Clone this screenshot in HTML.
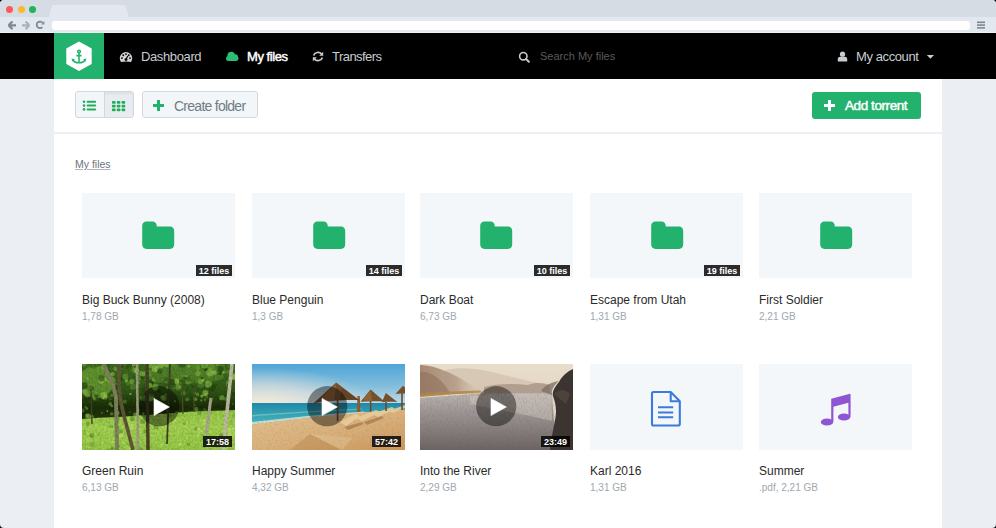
<!DOCTYPE html>
<html><head><meta charset="utf-8">
<style>
*{margin:0;padding:0;box-sizing:border-box}
html,body{width:996px;height:528px;background:#000;overflow:hidden}
body{font-family:"Liberation Sans",sans-serif}
#win{position:absolute;left:0;top:0;width:996px;height:528px;border-radius:4px;overflow:hidden;background:#ebeef2}
.abs{position:absolute}
#tabbar{left:0;top:0;width:996px;height:17px;background:#d6dce4}
#toolbar{left:0;top:17px;width:996px;height:16px;background:#e3e8f0;border-bottom:1px solid #eef2f7}
.dot{width:7px;height:7px;border-radius:50%;top:6px}
#addr{left:52px;top:21px;width:918px;height:9px;background:#fff;border-radius:3px}
#nav{left:0;top:33px;width:996px;height:46px;background:#000}
#logo{left:54px;top:33px;width:50px;height:46px;background:#23b26d}
.navtxt{top:49px;font-size:13px;line-height:16px;color:#c9cdd1;white-space:nowrap}
#content{left:54px;top:79px;width:888px;height:449px;background:#fff}
#sep{left:54px;top:132px;width:888px;height:2px;background:#ecf0f3}
.btn{border:1px solid #d3d8dd;background:#f3f6f8;border-radius:3px}
.card{width:153px;height:85px;background:#f4f7fa}
.title{font-size:12px;line-height:14px;color:#2a2a2a;white-space:nowrap}
.sub{font-size:10px;line-height:12px;color:#a0a8b0;white-space:nowrap}
.badge{background:#2b2b2b;color:#fff;font-size:9px;font-weight:700;line-height:11px;height:11px;padding:1px 2px 0;white-space:nowrap;text-align:center}
</style></head><body>
<div id="win">
  <div class="abs" id="tabbar"></div>
  <svg class="abs" style="left:0;top:0" width="140" height="18"><polygon points="52,5 125,5 129,17 49,17" fill="#e3e8f0"/></svg>
  <div class="abs dot" style="left:6px;background:#fa5b57"></div>
  <div class="abs dot" style="left:18px;background:#fcb731"></div>
  <div class="abs dot" style="left:29px;background:#22b35d"></div>
  <div class="abs" id="toolbar"></div>
  <div class="abs" id="addr"></div>
  <div class="abs" id="nav"></div>
  <div class="abs" id="logo"></div>
  <div class="abs" id="content"></div>
  <div class="abs" id="sep"></div>

  <!-- chrome icons -->
  <svg class="abs" style="left:6px;top:19px" width="42" height="13" viewBox="0 0 42 13">
    <path d="M2.5 6.3 L6.5 2.5 M2.5 6.3 L6.5 10.1 M2.5 6.3 L10 6.3" stroke="#7d8893" stroke-width="2.2" fill="none" stroke-linecap="butt"/>
    <path d="M23.5 6.3 L19.5 2.5 M23.5 6.3 L19.5 10.1 M23.5 6.3 L16 6.3" stroke="#a9b3bc" stroke-width="2.2" fill="none"/>
    <path d="M36.5 3.7 A3.3 3.3 0 1 0 36.4 8.1" stroke="#7d8893" stroke-width="1.8" fill="none"/>
    <path d="M35.2 5.5 L38.3 5.5 L38.3 2.0 Z" fill="#7d8893"/>
  </svg>
  <svg class="abs" style="left:976px;top:21px" width="10" height="8"><rect x="1" y="0.5" width="8" height="1.6" fill="#7d8893"/><rect x="1" y="3.3" width="8" height="1.6" fill="#7d8893"/><rect x="1" y="6.1" width="8" height="1.6" fill="#7d8893"/></svg>
  <!-- logo -->
  <svg class="abs" style="left:54px;top:33px" width="50" height="46" viewBox="0 0 50 46">
    <polygon points="25,8.4 37.7,15.4 37.7,30.9 25,37.9 12.3,30.9 12.3,15.4" fill="#fff"/>
    <g stroke="#23b26d" fill="none" stroke-width="1.6">
      <circle cx="25" cy="18.6" r="1.35"/>
      <path d="M25 20 V29.6"/>
      <path d="M22.4 22.6 H27.6"/>
      <path d="M18.8 26.8 Q20.2 29.7 25 29.7 Q29.8 29.7 31.2 26.8"/>
    </g>
    <path d="M17.4 25.6 L20.9 26.3 L18.6 28.6 Z M32.6 25.6 L29.1 26.3 L31.4 28.6 Z" fill="#23b26d"/>
  </svg>
  <!-- nav items -->
  <svg class="abs" style="left:119px;top:51px" width="14" height="12" viewBox="0 0 14 12">
    <path d="M1.95 10.9 A6.2 6.2 0 1 1 12.05 10.9 Q7 10.2 1.95 10.9 Z" fill="#cfd2d5"/>
    <g fill="#000"><circle cx="7" cy="3.1" r="0.95"/><circle cx="4.3" cy="4.3" r="0.95"/><circle cx="9.7" cy="4.3" r="0.95"/><circle cx="3" cy="7.1" r="0.95"/><circle cx="11" cy="7.1" r="0.95"/></g>
    <path d="M7 8.3 L8.8 5" stroke="#000" stroke-width="1.2"/><circle cx="7" cy="8.6" r="1.4" fill="#000"/>
  </svg>
  <div class="abs navtxt" style="left:141px;letter-spacing:-0.38px">Dashboard</div>
  <svg class="abs" style="left:225px;top:51px" width="15" height="11" viewBox="0 0 15 11">
    <g fill="#2dbb76"><circle cx="6.2" cy="4.5" r="3.8"/><circle cx="10.3" cy="5.9" r="2.7"/><circle cx="3.5" cy="7.5" r="2.5"/><circle cx="11.2" cy="7.6" r="2.4"/><rect x="3.5" y="6" width="7.7" height="4"/></g>
  </svg>
  <div class="abs navtxt" style="left:247px;color:#fff;font-weight:400;-webkit-text-stroke:0.45px #fff;font-size:13px;letter-spacing:-0.45px">My files</div>
  <svg class="abs" style="left:312px;top:51px" width="12" height="11" viewBox="0 0 12 11">
    <path d="M1.6 4.6 A4.6 4.4 0 0 1 9.6 3" stroke="#c9cdd1" stroke-width="1.7" fill="none"/>
    <path d="M11.2 0.8 L11.2 4.8 L7.2 4.8 Z" fill="#c9cdd1"/>
    <path d="M10.4 6.4 A4.6 4.4 0 0 1 2.4 8" stroke="#c9cdd1" stroke-width="1.7" fill="none"/>
    <path d="M0.8 10.2 L0.8 6.2 L4.8 6.2 Z" fill="#c9cdd1"/>
  </svg>
  <div class="abs navtxt" style="left:332px;letter-spacing:-0.54px">Transfers</div>
  <svg class="abs" style="left:518px;top:51px" width="12" height="12" viewBox="0 0 12 12">
    <circle cx="5.3" cy="5.2" r="3.7" stroke="#c8c9ca" stroke-width="1.6" fill="none"/>
    <path d="M8 8 L10.9 10.8" stroke="#c8c9ca" stroke-width="1.9" stroke-linecap="round"/>
  </svg>
  <div class="abs navtxt" style="left:540px;top:48px;font-size:11px;color:#5a5a5a">Search My files</div>
  <svg class="abs" style="left:837px;top:51px" width="11" height="11" viewBox="0 0 11 11">
    <circle cx="5.5" cy="3.2" r="2.6" fill="#c9cdd1"/>
    <path d="M0.8 10.5 V8.2 C0.8 6.6 2 5.8 3.2 5.8 H7.8 C9 5.8 10.2 6.6 10.2 8.2 V10.5 Z" fill="#c9cdd1"/>
  </svg>
  <div class="abs navtxt" style="left:856px;letter-spacing:-0.4px">My account</div>
  <svg class="abs" style="left:926px;top:54px" width="9" height="6"><path d="M0.8 1 H8 L4.4 4.8 Z" fill="#c9cdd1"/></svg>
<!--NAVEND-->

  <!-- toolbar -->
  <div class="abs btn" style="left:75px;top:91px;width:59px;height:27px;"></div>
  <div class="abs" style="left:104px;top:92px;width:29px;height:25px;background:#e8ecf0;box-shadow:inset 0 2px 2px rgba(0,0,0,0.05)"></div>
  <div class="abs" style="left:104px;top:92px;width:1px;height:25px;background:#d3d8dd"></div>
  <svg class="abs" style="left:82px;top:99px" width="16" height="13" viewBox="0 0 16 13">
    <g fill="#1fae5c"><circle cx="2" cy="2.7" r="1.3"/><circle cx="2" cy="6.6" r="1.3"/><circle cx="2" cy="10.4" r="1.3"/>
    <rect x="4.6" y="1.7" width="9.6" height="2" rx="1"/><rect x="4.6" y="5.6" width="9.6" height="2" rx="1"/><rect x="4.6" y="9.4" width="9.6" height="2" rx="1"/></g>
  </svg>
  <svg class="abs" style="left:111px;top:100px" width="15" height="12" viewBox="0 0 15 12">
    <g fill="#1fae5c">
    <rect x="1" y="1" width="3.6" height="2.8" rx="0.8"/><rect x="5.8" y="1" width="3.6" height="2.8" rx="0.8"/><rect x="10.6" y="1" width="3.6" height="2.8" rx="0.8"/>
    <rect x="1" y="4.7" width="3.6" height="2.8" rx="0.8"/><rect x="5.8" y="4.7" width="3.6" height="2.8" rx="0.8"/><rect x="10.6" y="4.7" width="3.6" height="2.8" rx="0.8"/>
    <rect x="1" y="8.4" width="3.6" height="2.8" rx="0.8"/><rect x="5.8" y="8.4" width="3.6" height="2.8" rx="0.8"/><rect x="10.6" y="8.4" width="3.6" height="2.8" rx="0.8"/>
    </g>
  </svg>
  <div class="abs btn" style="left:142px;top:91px;width:116px;height:27px;"></div>
  <svg class="abs" style="left:152px;top:99px" width="13" height="13"><path d="M5 1 H8 V5 H12 V8 H8 V12 H5 V8 H1 V5 H5 Z" fill="#23b26d"/></svg>
  <div class="abs" style="left:174px;top:98px;font-size:14px;line-height:16px;color:#6f7c87;white-space:nowrap;letter-spacing:-0.74px">Create folder</div>
  <div class="abs" style="left:812px;top:92px;width:109px;height:27px;background:#23b26d;border-radius:3px"></div>
  <svg class="abs" style="left:823px;top:99px" width="13" height="13"><path d="M5 1 H8 V5 H12 V8 H8 V12 H5 V8 H1 V5 H5 Z" fill="#fff"/></svg>
  <div class="abs" style="left:845px;top:98px;font-size:13.5px;line-height:16px;color:#fff;font-weight:400;-webkit-text-stroke:0.45px #fff;white-space:nowrap;letter-spacing:-0.42px">Add torrent</div>
  <div class="abs" style="left:75px;top:158px;font-size:10.5px;line-height:13px;color:#6c757e;white-space:nowrap;text-decoration:underline;text-decoration-color:#b0b6bc">My files</div>

  <!-- cards -->
  <div class="abs card" style="left:82px;top:193px"></div>
  <svg class="abs" style="left:142px;top:221px" width="33" height="29" viewBox="0 0 33 29"><path d="M4.5 0.6 H10.5 C13 0.6 14.8 2.4 14.8 5.6 H28 C30.5 5.6 32.2 7.4 32.2 10 V23.6 C32.2 26.2 30.5 28 28 28 H4.5 C2 28 0.2 26.2 0.2 23.6 V5 C0.2 2.4 2 0.6 4.5 0.6 Z" fill="#23b26d"/></svg>
  <div class="abs badge" style="left:196px;top:265px;width:36px">12 files</div>
  <div class="abs title" style="left:82px;top:293px">Big Buck Bunny (2008)</div>
  <div class="abs sub" style="left:82px;top:311px">1,78 GB</div>
  <div class="abs card" style="left:252px;top:193px"></div>
  <svg class="abs" style="left:312.6px;top:221px" width="33" height="29" viewBox="0 0 33 29"><path d="M4.5 0.6 H10.5 C13 0.6 14.8 2.4 14.8 5.6 H28 C30.5 5.6 32.2 7.4 32.2 10 V23.6 C32.2 26.2 30.5 28 28 28 H4.5 C2 28 0.2 26.2 0.2 23.6 V5 C0.2 2.4 2 0.6 4.5 0.6 Z" fill="#23b26d"/></svg>
  <div class="abs badge" style="left:366px;top:265px;width:36px">14 files</div>
  <div class="abs title" style="left:252px;top:293px">Blue Penguin</div>
  <div class="abs sub" style="left:252px;top:311px">1,3 GB</div>
  <div class="abs card" style="left:420px;top:193px"></div>
  <svg class="abs" style="left:480.3px;top:221px" width="33" height="29" viewBox="0 0 33 29"><path d="M4.5 0.6 H10.5 C13 0.6 14.8 2.4 14.8 5.6 H28 C30.5 5.6 32.2 7.4 32.2 10 V23.6 C32.2 26.2 30.5 28 28 28 H4.5 C2 28 0.2 26.2 0.2 23.6 V5 C0.2 2.4 2 0.6 4.5 0.6 Z" fill="#23b26d"/></svg>
  <div class="abs badge" style="left:534px;top:265px;width:36px">10 files</div>
  <div class="abs title" style="left:420px;top:293px">Dark Boat</div>
  <div class="abs sub" style="left:420px;top:311px">6,73 GB</div>
  <div class="abs card" style="left:590px;top:193px"></div>
  <svg class="abs" style="left:650.7px;top:221px" width="33" height="29" viewBox="0 0 33 29"><path d="M4.5 0.6 H10.5 C13 0.6 14.8 2.4 14.8 5.6 H28 C30.5 5.6 32.2 7.4 32.2 10 V23.6 C32.2 26.2 30.5 28 28 28 H4.5 C2 28 0.2 26.2 0.2 23.6 V5 C0.2 2.4 2 0.6 4.5 0.6 Z" fill="#23b26d"/></svg>
  <div class="abs badge" style="left:704px;top:265px;width:36px">19 files</div>
  <div class="abs title" style="left:590px;top:293px">Escape from Utah</div>
  <div class="abs sub" style="left:590px;top:311px">1,31 GB</div>
  <div class="abs card" style="left:759px;top:193px"></div>
  <svg class="abs" style="left:820px;top:221px" width="33" height="29" viewBox="0 0 33 29"><path d="M4.5 0.6 H10.5 C13 0.6 14.8 2.4 14.8 5.6 H28 C30.5 5.6 32.2 7.4 32.2 10 V23.6 C32.2 26.2 30.5 28 28 28 H4.5 C2 28 0.2 26.2 0.2 23.6 V5 C0.2 2.4 2 0.6 4.5 0.6 Z" fill="#23b26d"/></svg>
  <div class="abs title" style="left:759px;top:293px">First Soldier</div>
  <div class="abs sub" style="left:759px;top:311px">2,21 GB</div>
  <div class="abs title" style="left:82px;top:464px">Green Ruin</div>
  <div class="abs sub" style="left:82px;top:482px">6,13 GB</div>
  <div class="abs title" style="left:252px;top:464px">Happy Summer</div>
  <div class="abs sub" style="left:252px;top:482px">4,32 GB</div>
  <div class="abs title" style="left:420px;top:464px">Into the River</div>
  <div class="abs sub" style="left:420px;top:482px">2,29 GB</div>
  <div class="abs title" style="left:590px;top:464px">Karl 2016</div>
  <div class="abs sub" style="left:590px;top:482px">1,31 GB</div>
  <div class="abs title" style="left:759px;top:464px">Summer</div>
  <div class="abs sub" style="left:759px;top:482px">.pdf, 2,21 GB</div>
<!--CARDSEND-->

  <!-- row2 -->
<svg class="abs" style="left:82px;top:364px" width="153" height="86" viewBox="0 0 153 86">
  <defs>
   <linearGradient id="fg" x1="0" y1="0" x2="0" y2="1">
    <stop offset="0" stop-color="#426e22"/><stop offset="0.3" stop-color="#325a18"/><stop offset="0.5" stop-color="#1c2e08"/><stop offset="0.65" stop-color="#22360c"/><stop offset="1" stop-color="#22360c"/></linearGradient>
   <linearGradient id="gg" x1="0" y1="0" x2="0" y2="1"><stop offset="0" stop-color="#94c846"/><stop offset="0.4" stop-color="#a6d452"/><stop offset="1" stop-color="#98cc48"/></linearGradient>
   <filter id="tex" x="0" y="0" width="100%" height="100%"><feTurbulence type="fractalNoise" baseFrequency="0.45" numOctaves="2" seed="4"/><feColorMatrix type="matrix" values="0 0 0 0 0  0 0 0 0 0  0 0 0 0 0  0 0 0 -1.6 1.05"/></filter>
  </defs>
  <rect width="153" height="86" fill="url(#fg)"/>
<ellipse cx="14" cy="18" rx="18" ry="16" fill="#7cb43c" opacity="0.6"/>
<ellipse cx="100" cy="8" rx="50" ry="12" fill="#6aa032" opacity="0.45"/>
<circle cx="49.5" cy="3.7" r="2.9" fill="#82b840" opacity="0.6"/>
<circle cx="125.7" cy="1.6" r="2.7" fill="#94c84a" opacity="0.6"/>
<circle cx="5.7" cy="14.5" r="1.4" fill="#82b840" opacity="0.6"/>
<circle cx="84.3" cy="0.2" r="2.7" fill="#94c84a" opacity="0.6"/>
<circle cx="96.5" cy="20.2" r="1.4" fill="#1e3a0c" opacity="0.6"/>
<circle cx="7.6" cy="6.4" r="2.6" fill="#5a9030" opacity="0.6"/>
<circle cx="44.3" cy="3.5" r="1.5" fill="#2a5012" opacity="0.6"/>
<circle cx="85.7" cy="23.9" r="1.5" fill="#94c84a" opacity="0.6"/>
<circle cx="57.0" cy="18.8" r="1.4" fill="#6ea436" opacity="0.6"/>
<circle cx="94.7" cy="16.9" r="2.6" fill="#a6d456" opacity="0.6"/>
<circle cx="71.2" cy="33.1" r="2.1" fill="#94c84a" opacity="0.6"/>
<circle cx="121.5" cy="24.6" r="1.8" fill="#2a5012" opacity="0.6"/>
<circle cx="80.4" cy="31.3" r="3.1" fill="#2a5012" opacity="0.6"/>
<circle cx="93.2" cy="0.8" r="2.5" fill="#5a9030" opacity="0.6"/>
<circle cx="115.8" cy="3.8" r="2.5" fill="#6ea436" opacity="0.6"/>
<circle cx="147.2" cy="0.9" r="2.7" fill="#a6d456" opacity="0.6"/>
<circle cx="52.0" cy="11.3" r="2.5" fill="#34561a" opacity="0.6"/>
<circle cx="10.5" cy="1.6" r="1.9" fill="#82b840" opacity="0.6"/>
<circle cx="9.3" cy="24.7" r="2.9" fill="#34561a" opacity="0.6"/>
<circle cx="43.5" cy="12.7" r="2.9" fill="#6ea436" opacity="0.6"/>
<circle cx="143.9" cy="11.5" r="2.8" fill="#34561a" opacity="0.6"/>
<circle cx="9.0" cy="27.2" r="1.5" fill="#94c84a" opacity="0.6"/>
<circle cx="60.9" cy="32.8" r="2.5" fill="#5a9030" opacity="0.6"/>
<circle cx="68.7" cy="18.9" r="3.5" fill="#1e3a0c" opacity="0.6"/>
<circle cx="132.2" cy="8.6" r="2.3" fill="#a6d456" opacity="0.6"/>
<circle cx="104.5" cy="12.5" r="1.8" fill="#82b840" opacity="0.6"/>
<circle cx="27.0" cy="6.8" r="1.8" fill="#34561a" opacity="0.6"/>
<circle cx="127.2" cy="4.9" r="1.9" fill="#5a9030" opacity="0.6"/>
<circle cx="64.1" cy="12.0" r="2.7" fill="#5a9030" opacity="0.6"/>
<circle cx="105.6" cy="17.6" r="2.8" fill="#6ea436" opacity="0.6"/>
<circle cx="69.9" cy="31.1" r="3.7" fill="#1e3a0c" opacity="0.6"/>
<circle cx="60.9" cy="13.0" r="2.5" fill="#1e3a0c" opacity="0.6"/>
<circle cx="9.5" cy="0.6" r="1.7" fill="#5a9030" opacity="0.6"/>
<circle cx="16.8" cy="20.8" r="1.5" fill="#5a9030" opacity="0.6"/>
<circle cx="82.1" cy="34.1" r="2.8" fill="#82b840" opacity="0.6"/>
<circle cx="133.8" cy="21.3" r="1.6" fill="#2a5012" opacity="0.6"/>
<circle cx="146.2" cy="20.9" r="2.4" fill="#82b840" opacity="0.6"/>
<circle cx="129.9" cy="35.7" r="2.4" fill="#34561a" opacity="0.6"/>
<circle cx="47.7" cy="3.5" r="3.1" fill="#2a5012" opacity="0.6"/>
<circle cx="73.2" cy="24.3" r="2.5" fill="#94c84a" opacity="0.6"/>
<circle cx="145.5" cy="18.1" r="1.6" fill="#6ea436" opacity="0.6"/>
<circle cx="116.0" cy="9.3" r="2.9" fill="#82b840" opacity="0.6"/>
<circle cx="106.5" cy="7.9" r="2.2" fill="#5a9030" opacity="0.6"/>
<circle cx="54.4" cy="6.5" r="2.6" fill="#a6d456" opacity="0.6"/>
<circle cx="97.4" cy="21.3" r="3.2" fill="#94c84a" opacity="0.6"/>
<circle cx="123.3" cy="29.1" r="3.1" fill="#94c84a" opacity="0.6"/>
<circle cx="30.6" cy="16.7" r="3.1" fill="#6ea436" opacity="0.6"/>
<circle cx="120.9" cy="15.9" r="1.7" fill="#a6d456" opacity="0.6"/>
<circle cx="68.4" cy="33.6" r="3.8" fill="#a6d456" opacity="0.6"/>
<circle cx="12.3" cy="1.9" r="2.4" fill="#a6d456" opacity="0.6"/>
<circle cx="31.3" cy="21.7" r="3.5" fill="#6ea436" opacity="0.6"/>
<circle cx="73.4" cy="22.8" r="3.3" fill="#82b840" opacity="0.6"/>
<circle cx="127.7" cy="2.6" r="2.2" fill="#94c84a" opacity="0.6"/>
<circle cx="73.1" cy="4.8" r="3.3" fill="#a6d456" opacity="0.6"/>
<circle cx="13.3" cy="34.0" r="3.1" fill="#34561a" opacity="0.6"/>
<circle cx="61.4" cy="34.0" r="3.1" fill="#5a9030" opacity="0.6"/>
<circle cx="151.9" cy="-1.0" r="2.7" fill="#34561a" opacity="0.6"/>
<circle cx="123.4" cy="3.6" r="3.3" fill="#34561a" opacity="0.6"/>
<circle cx="100.6" cy="11.3" r="2.6" fill="#5a9030" opacity="0.6"/>
<circle cx="3.3" cy="28.4" r="3.1" fill="#82b840" opacity="0.6"/>
<circle cx="80.6" cy="33.5" r="2.3" fill="#94c84a" opacity="0.6"/>
<circle cx="126.4" cy="6.0" r="1.9" fill="#2a5012" opacity="0.6"/>
<circle cx="76.7" cy="27.0" r="2.0" fill="#1e3a0c" opacity="0.6"/>
<circle cx="127.6" cy="0.3" r="3.1" fill="#34561a" opacity="0.6"/>
<circle cx="101.4" cy="29.0" r="2.5" fill="#5a9030" opacity="0.6"/>
<circle cx="81.4" cy="17.9" r="1.2" fill="#34561a" opacity="0.6"/>
<circle cx="118.8" cy="21.1" r="3.2" fill="#5a9030" opacity="0.6"/>
<circle cx="26.4" cy="16.0" r="3.1" fill="#6ea436" opacity="0.6"/>
<circle cx="49.9" cy="17.7" r="2.6" fill="#82b840" opacity="0.6"/>
<circle cx="135.1" cy="0.2" r="1.7" fill="#6ea436" opacity="0.6"/>
<circle cx="118.2" cy="17.3" r="2.7" fill="#82b840" opacity="0.6"/>
<circle cx="67.8" cy="21.3" r="2.5" fill="#94c84a" opacity="0.6"/>
<circle cx="106.0" cy="15.2" r="2.6" fill="#34561a" opacity="0.6"/>
<circle cx="77.7" cy="7.4" r="2.6" fill="#2a5012" opacity="0.6"/>
<circle cx="141.2" cy="31.9" r="1.7" fill="#34561a" opacity="0.6"/>
<circle cx="21.0" cy="2.6" r="2.3" fill="#82b840" opacity="0.6"/>
<circle cx="102.7" cy="14.3" r="1.8" fill="#2a5012" opacity="0.6"/>
<circle cx="119.9" cy="32.1" r="1.6" fill="#a6d456" opacity="0.6"/>
<circle cx="21.9" cy="31.5" r="3.7" fill="#94c84a" opacity="0.6"/>
<circle cx="114.2" cy="1.6" r="3.5" fill="#5a9030" opacity="0.6"/>
<circle cx="151.5" cy="29.6" r="1.6" fill="#1e3a0c" opacity="0.6"/>
<circle cx="152.1" cy="13.3" r="2.3" fill="#a6d456" opacity="0.6"/>
<circle cx="48.7" cy="25.4" r="1.3" fill="#34561a" opacity="0.6"/>
<circle cx="67.4" cy="-1.3" r="2.1" fill="#2a5012" opacity="0.6"/>
<circle cx="78.4" cy="0.4" r="3.8" fill="#94c84a" opacity="0.6"/>
<circle cx="148.7" cy="2.0" r="1.9" fill="#6ea436" opacity="0.6"/>
<circle cx="138.6" cy="4.9" r="3.2" fill="#1e3a0c" opacity="0.6"/>
<circle cx="130.0" cy="23.7" r="3.7" fill="#1e3a0c" opacity="0.6"/>
<circle cx="22.9" cy="32.9" r="2.7" fill="#a6d456" opacity="0.6"/>
<circle cx="13.7" cy="0.2" r="3.0" fill="#1e3a0c" opacity="0.6"/>
<circle cx="137.0" cy="8.2" r="1.2" fill="#82b840" opacity="0.6"/>
<circle cx="122.6" cy="1.2" r="3.4" fill="#82b840" opacity="0.6"/>
<circle cx="40.5" cy="2.6" r="1.2" fill="#1e3a0c" opacity="0.6"/>
<circle cx="141.8" cy="8.2" r="1.5" fill="#94c84a" opacity="0.6"/>
<circle cx="143.5" cy="34.8" r="1.9" fill="#5a9030" opacity="0.6"/>
<circle cx="30.9" cy="9.9" r="2.0" fill="#94c84a" opacity="0.6"/>
<circle cx="44.4" cy="17.0" r="1.7" fill="#a6d456" opacity="0.6"/>
<circle cx="123.0" cy="35.8" r="1.3" fill="#6ea436" opacity="0.6"/>
<circle cx="112.2" cy="18.9" r="1.7" fill="#34561a" opacity="0.6"/>
<circle cx="37.6" cy="15.0" r="2.9" fill="#1e3a0c" opacity="0.6"/>
<circle cx="100.4" cy="18.7" r="3.5" fill="#2a5012" opacity="0.6"/>
<circle cx="105.2" cy="35.3" r="2.1" fill="#5a9030" opacity="0.6"/>
<circle cx="61.9" cy="11.2" r="1.3" fill="#5a9030" opacity="0.6"/>
<circle cx="2.2" cy="21.8" r="3.5" fill="#1e3a0c" opacity="0.6"/>
<circle cx="25.0" cy="1.2" r="3.4" fill="#2a5012" opacity="0.6"/>
<circle cx="91.6" cy="24.3" r="1.3" fill="#5a9030" opacity="0.6"/>
<circle cx="24.1" cy="14.9" r="1.9" fill="#a6d456" opacity="0.6"/>
<circle cx="148.8" cy="18.8" r="1.8" fill="#2a5012" opacity="0.6"/>
<circle cx="33.3" cy="5.0" r="2.1" fill="#82b840" opacity="0.6"/>
<circle cx="72.6" cy="17.1" r="1.7" fill="#6ea436" opacity="0.6"/>
<circle cx="13.9" cy="29.0" r="1.6" fill="#6ea436" opacity="0.6"/>
<circle cx="60.3" cy="9.4" r="2.8" fill="#82b840" opacity="0.6"/>
<circle cx="89.6" cy="18.1" r="3.2" fill="#1e3a0c" opacity="0.6"/>
<circle cx="116.9" cy="25.4" r="2.5" fill="#2a5012" opacity="0.6"/>
<circle cx="110.8" cy="22.4" r="1.3" fill="#1e3a0c" opacity="0.6"/>
<circle cx="112.3" cy="28.9" r="1.6" fill="#6ea436" opacity="0.6"/>
<circle cx="126.4" cy="20.2" r="3.5" fill="#94c84a" opacity="0.6"/>
<circle cx="13.0" cy="-0.4" r="2.9" fill="#82b840" opacity="0.6"/>
<circle cx="57.6" cy="15.2" r="1.3" fill="#6ea436" opacity="0.6"/>
<circle cx="95.8" cy="23.9" r="2.5" fill="#6ea436" opacity="0.6"/>
<circle cx="69.9" cy="0.7" r="3.6" fill="#82b840" opacity="0.6"/>
<circle cx="100.9" cy="0.5" r="3.1" fill="#2a5012" opacity="0.6"/>
<circle cx="123.8" cy="30.2" r="1.8" fill="#94c84a" opacity="0.6"/>
<circle cx="35.3" cy="22.7" r="2.4" fill="#1e3a0c" opacity="0.6"/>
<circle cx="11.7" cy="32.6" r="1.9" fill="#6ea436" opacity="0.6"/>
<circle cx="94.4" cy="22.4" r="1.4" fill="#5a9030" opacity="0.6"/>
<circle cx="50.8" cy="22.8" r="3.0" fill="#5a9030" opacity="0.6"/>
<circle cx="1.9" cy="0.3" r="1.9" fill="#82b840" opacity="0.6"/>
<circle cx="105.9" cy="23.7" r="2.0" fill="#2a5012" opacity="0.6"/>
<circle cx="71.1" cy="15.7" r="1.5" fill="#94c84a" opacity="0.6"/>
<circle cx="47.7" cy="1.3" r="2.4" fill="#2a5012" opacity="0.6"/>
<circle cx="70.2" cy="29.2" r="3.7" fill="#34561a" opacity="0.6"/>
<circle cx="152.1" cy="12.7" r="3.6" fill="#94c84a" opacity="0.6"/>
<circle cx="11.4" cy="1.4" r="3.1" fill="#2a5012" opacity="0.6"/>
<circle cx="145.8" cy="3.0" r="3.3" fill="#2a5012" opacity="0.6"/>
<circle cx="135.7" cy="24.7" r="1.8" fill="#34561a" opacity="0.6"/>
<circle cx="60.3" cy="4.0" r="3.7" fill="#34561a" opacity="0.6"/>
<circle cx="62.0" cy="25.6" r="2.3" fill="#1e3a0c" opacity="0.6"/>
<circle cx="48.4" cy="29.9" r="1.2" fill="#a6d456" opacity="0.6"/>
<circle cx="128.4" cy="2.6" r="3.6" fill="#6ea436" opacity="0.6"/>
<circle cx="137.9" cy="9.0" r="2.2" fill="#1e3a0c" opacity="0.6"/>
<circle cx="59.7" cy="31.1" r="1.4" fill="#1e3a0c" opacity="0.6"/>
<circle cx="115.6" cy="30.5" r="1.9" fill="#6ea436" opacity="0.6"/>
<circle cx="127.7" cy="8.9" r="3.6" fill="#94c84a" opacity="0.6"/>
<circle cx="148.6" cy="14.6" r="2.0" fill="#a6d456" opacity="0.6"/>
<circle cx="120.1" cy="14.3" r="1.3" fill="#1e3a0c" opacity="0.6"/>
<circle cx="139.8" cy="33.7" r="2.6" fill="#82b840" opacity="0.6"/>
<circle cx="7.6" cy="25.8" r="2.4" fill="#5a9030" opacity="0.6"/>
<circle cx="98.6" cy="8.9" r="1.3" fill="#5a9030" opacity="0.6"/>
<circle cx="26.1" cy="13.8" r="1.9" fill="#2a5012" opacity="0.6"/>
<circle cx="113.1" cy="35.1" r="1.9" fill="#94c84a" opacity="0.6"/>
<circle cx="46.0" cy="19.2" r="2.2" fill="#5a9030" opacity="0.6"/>
<circle cx="98.4" cy="0.9" r="2.5" fill="#34561a" opacity="0.6"/>
<circle cx="84.2" cy="15.2" r="2.1" fill="#34561a" opacity="0.6"/>
<circle cx="65.4" cy="18.8" r="1.8" fill="#5a9030" opacity="0.6"/>
<circle cx="52.3" cy="1.5" r="1.8" fill="#2a5012" opacity="0.6"/>
<circle cx="123.8" cy="5.7" r="1.3" fill="#1e3a0c" opacity="0.6"/>
<circle cx="58.6" cy="26.3" r="1.7" fill="#2a5012" opacity="0.6"/>
<circle cx="51.7" cy="0.4" r="1.9" fill="#a6d456" opacity="0.6"/>
<circle cx="19.3" cy="17.1" r="2.8" fill="#94c84a" opacity="0.6"/>
<circle cx="14.2" cy="32.1" r="2.2" fill="#34561a" opacity="0.6"/>
<circle cx="66.1" cy="9.9" r="3.3" fill="#6ea436" opacity="0.6"/>
<circle cx="19.5" cy="14.2" r="3.2" fill="#34561a" opacity="0.6"/>
<circle cx="148.1" cy="16.6" r="1.4" fill="#34561a" opacity="0.6"/>
<circle cx="148.8" cy="7.4" r="1.5" fill="#5a9030" opacity="0.6"/>
<circle cx="23.3" cy="34.9" r="1.5" fill="#34561a" opacity="0.6"/>
<circle cx="13.0" cy="27.5" r="1.2" fill="#5a9030" opacity="0.6"/>
<circle cx="35.6" cy="33.0" r="2.9" fill="#2a5012" opacity="0.6"/>
<circle cx="147.3" cy="21.8" r="2.6" fill="#1e3a0c" opacity="0.6"/>
<circle cx="106.9" cy="2.3" r="1.4" fill="#94c84a" opacity="0.6"/>
<circle cx="59.4" cy="34.9" r="1.6" fill="#5e9030" opacity="0.55"/>
<circle cx="82.2" cy="51.9" r="1.2" fill="#80b040" opacity="0.55"/>
<circle cx="98.6" cy="49.4" r="1.5" fill="#4a7a24" opacity="0.55"/>
<circle cx="83.7" cy="30.6" r="1.4" fill="#80b040" opacity="0.55"/>
<circle cx="8.5" cy="34.3" r="2.0" fill="#1c2c08" opacity="0.55"/>
<circle cx="12.4" cy="35.0" r="1.4" fill="#80b040" opacity="0.55"/>
<circle cx="34.7" cy="30.8" r="1.3" fill="#1c2c08" opacity="0.55"/>
<circle cx="55.4" cy="38.7" r="0.8" fill="#80b040" opacity="0.55"/>
<circle cx="113.1" cy="41.1" r="1.1" fill="#4a7a24" opacity="0.55"/>
<circle cx="47.7" cy="48.0" r="1.1" fill="#4a7a24" opacity="0.55"/>
<circle cx="40.5" cy="49.6" r="1.0" fill="#1c2c08" opacity="0.55"/>
<circle cx="93.3" cy="49.7" r="1.5" fill="#5e9030" opacity="0.55"/>
<circle cx="145.2" cy="33.2" r="1.4" fill="#4a7a24" opacity="0.55"/>
<circle cx="3.6" cy="43.1" r="1.4" fill="#5e9030" opacity="0.55"/>
<circle cx="28.2" cy="39.9" r="1.8" fill="#80b040" opacity="0.55"/>
<circle cx="112.1" cy="51.9" r="2.1" fill="#80b040" opacity="0.55"/>
<circle cx="29.2" cy="44.4" r="1.5" fill="#1c2c08" opacity="0.55"/>
<circle cx="4.9" cy="44.6" r="1.3" fill="#80b040" opacity="0.55"/>
<circle cx="150.7" cy="39.7" r="1.0" fill="#5e9030" opacity="0.55"/>
<circle cx="42.8" cy="37.7" r="2.1" fill="#5e9030" opacity="0.55"/>
<circle cx="85.9" cy="46.7" r="1.3" fill="#80b040" opacity="0.55"/>
<circle cx="125.8" cy="39.5" r="0.9" fill="#1c2c08" opacity="0.55"/>
<circle cx="29.9" cy="41.9" r="1.4" fill="#80b040" opacity="0.55"/>
<circle cx="55.7" cy="49.7" r="0.8" fill="#1c2c08" opacity="0.55"/>
<circle cx="37.9" cy="43.8" r="1.4" fill="#1c2c08" opacity="0.55"/>
<circle cx="5.3" cy="31.4" r="2.1" fill="#80b040" opacity="0.55"/>
<circle cx="29.8" cy="31.4" r="1.6" fill="#80b040" opacity="0.55"/>
<circle cx="41.7" cy="51.1" r="1.7" fill="#80b040" opacity="0.55"/>
<circle cx="114.2" cy="45.2" r="2.1" fill="#80b040" opacity="0.55"/>
<circle cx="0.6" cy="46.6" r="2.1" fill="#5e9030" opacity="0.55"/>
<circle cx="3.7" cy="35.1" r="1.5" fill="#1c2c08" opacity="0.55"/>
<circle cx="145.9" cy="38.5" r="1.2" fill="#1c2c08" opacity="0.55"/>
<circle cx="124.7" cy="32.9" r="1.5" fill="#5e9030" opacity="0.55"/>
<circle cx="122.8" cy="46.2" r="2.0" fill="#4a7a24" opacity="0.55"/>
<circle cx="92.9" cy="37.2" r="1.2" fill="#80b040" opacity="0.55"/>
<circle cx="119.9" cy="43.1" r="1.5" fill="#1c2c08" opacity="0.55"/>
<circle cx="115.2" cy="35.4" r="0.9" fill="#5e9030" opacity="0.55"/>
<circle cx="73.7" cy="42.0" r="1.0" fill="#1c2c08" opacity="0.55"/>
<circle cx="135.2" cy="51.7" r="1.2" fill="#5e9030" opacity="0.55"/>
<circle cx="31.9" cy="39.3" r="2.2" fill="#1c2c08" opacity="0.55"/>
<circle cx="26.5" cy="32.9" r="1.4" fill="#4a7a24" opacity="0.55"/>
<circle cx="114.4" cy="48.6" r="1.7" fill="#5e9030" opacity="0.55"/>
<circle cx="119.3" cy="36.5" r="1.2" fill="#80b040" opacity="0.55"/>
<circle cx="57.1" cy="46.2" r="1.1" fill="#4a7a24" opacity="0.55"/>
<circle cx="28.4" cy="35.2" r="1.2" fill="#4a7a24" opacity="0.55"/>
<path d="M0 55 C15 53 30 54 50 52 C70 51 90 49 110 47.5 C125 47 140 46.5 153 46 V86 H0 Z" fill="url(#gg)"/>
<circle cx="49.9" cy="62.4" r="2.6" fill="#cce874" opacity="0.55"/>
<circle cx="80.5" cy="72.3" r="1.0" fill="#6a9a2e" opacity="0.55"/>
<circle cx="151.6" cy="51.0" r="1.7" fill="#86b83e" opacity="0.55"/>
<circle cx="128.6" cy="82.7" r="0.9" fill="#b0d858" opacity="0.55"/>
<circle cx="35.6" cy="49.0" r="1.9" fill="#cce874" opacity="0.55"/>
<circle cx="29.7" cy="49.9" r="1.7" fill="#86b83e" opacity="0.55"/>
<circle cx="68.7" cy="57.1" r="2.2" fill="#c0e064" opacity="0.55"/>
<circle cx="16.2" cy="70.2" r="1.9" fill="#86b83e" opacity="0.55"/>
<circle cx="5.7" cy="60.3" r="0.9" fill="#b0d858" opacity="0.55"/>
<circle cx="5.9" cy="75.6" r="2.4" fill="#c0e064" opacity="0.55"/>
<circle cx="125.3" cy="63.0" r="1.5" fill="#cce874" opacity="0.55"/>
<circle cx="47.8" cy="54.9" r="2.2" fill="#cce874" opacity="0.55"/>
<circle cx="74.0" cy="62.9" r="2.2" fill="#5a8828" opacity="0.55"/>
<circle cx="84.2" cy="71.9" r="1.0" fill="#86b83e" opacity="0.55"/>
<circle cx="60.9" cy="57.6" r="2.6" fill="#5a8828" opacity="0.55"/>
<circle cx="47.1" cy="84.2" r="1.4" fill="#cce874" opacity="0.55"/>
<circle cx="135.2" cy="63.1" r="0.8" fill="#b0d858" opacity="0.55"/>
<circle cx="98.6" cy="62.2" r="1.5" fill="#c0e064" opacity="0.55"/>
<circle cx="66.4" cy="53.1" r="1.0" fill="#c0e064" opacity="0.55"/>
<circle cx="62.2" cy="81.4" r="1.6" fill="#86b83e" opacity="0.55"/>
<circle cx="19.9" cy="49.0" r="1.1" fill="#6a9a2e" opacity="0.55"/>
<circle cx="13.6" cy="71.3" r="1.5" fill="#cce874" opacity="0.55"/>
<circle cx="26.3" cy="60.6" r="1.1" fill="#86b83e" opacity="0.55"/>
<circle cx="141.6" cy="51.2" r="1.7" fill="#86b83e" opacity="0.55"/>
<circle cx="46.1" cy="79.7" r="0.9" fill="#6a9a2e" opacity="0.55"/>
<circle cx="48.1" cy="70.7" r="1.9" fill="#c0e064" opacity="0.55"/>
<circle cx="138.3" cy="71.2" r="2.3" fill="#86b83e" opacity="0.55"/>
<circle cx="98.0" cy="80.4" r="1.9" fill="#cce874" opacity="0.55"/>
<circle cx="129.5" cy="79.3" r="1.1" fill="#86b83e" opacity="0.55"/>
<circle cx="6.4" cy="83.6" r="1.1" fill="#b0d858" opacity="0.55"/>
<circle cx="18.8" cy="56.6" r="2.1" fill="#86b83e" opacity="0.55"/>
<circle cx="6.3" cy="68.9" r="2.2" fill="#c0e064" opacity="0.55"/>
<circle cx="102.2" cy="59.6" r="1.5" fill="#6a9a2e" opacity="0.55"/>
<circle cx="84.2" cy="71.5" r="1.4" fill="#6a9a2e" opacity="0.55"/>
<circle cx="47.2" cy="56.7" r="1.5" fill="#b0d858" opacity="0.55"/>
<circle cx="68.4" cy="64.1" r="0.8" fill="#cce874" opacity="0.55"/>
<circle cx="150.9" cy="65.1" r="1.6" fill="#cce874" opacity="0.55"/>
<circle cx="119.3" cy="64.9" r="1.1" fill="#6a9a2e" opacity="0.55"/>
<circle cx="61.3" cy="49.6" r="1.4" fill="#b0d858" opacity="0.55"/>
<circle cx="14.0" cy="64.2" r="1.7" fill="#c0e064" opacity="0.55"/>
<circle cx="6.2" cy="52.1" r="2.5" fill="#b0d858" opacity="0.55"/>
<circle cx="119.0" cy="66.9" r="0.9" fill="#cce874" opacity="0.55"/>
<circle cx="136.9" cy="72.5" r="2.2" fill="#c0e064" opacity="0.55"/>
<circle cx="131.1" cy="85.8" r="2.1" fill="#c0e064" opacity="0.55"/>
<circle cx="29.6" cy="85.3" r="1.7" fill="#86b83e" opacity="0.55"/>
<circle cx="105.0" cy="75.1" r="1.2" fill="#b0d858" opacity="0.55"/>
<circle cx="93.4" cy="56.8" r="1.4" fill="#cce874" opacity="0.55"/>
<circle cx="42.1" cy="78.8" r="1.1" fill="#cce874" opacity="0.55"/>
<circle cx="147.5" cy="65.7" r="1.9" fill="#cce874" opacity="0.55"/>
<circle cx="77.4" cy="59.4" r="0.9" fill="#86b83e" opacity="0.55"/>
<circle cx="61.7" cy="71.8" r="1.3" fill="#b0d858" opacity="0.55"/>
<circle cx="137.0" cy="53.6" r="2.2" fill="#c0e064" opacity="0.55"/>
<circle cx="117.5" cy="48.9" r="2.3" fill="#6a9a2e" opacity="0.55"/>
<circle cx="84.9" cy="69.6" r="2.4" fill="#c0e064" opacity="0.55"/>
<circle cx="38.6" cy="67.9" r="2.3" fill="#5a8828" opacity="0.55"/>
<circle cx="122.0" cy="57.3" r="2.6" fill="#cce874" opacity="0.55"/>
<circle cx="22.4" cy="59.9" r="0.9" fill="#86b83e" opacity="0.55"/>
<circle cx="27.0" cy="76.0" r="0.9" fill="#cce874" opacity="0.55"/>
<circle cx="38.8" cy="71.9" r="2.6" fill="#cce874" opacity="0.55"/>
<circle cx="142.1" cy="81.9" r="2.1" fill="#5a8828" opacity="0.55"/>
<circle cx="5.2" cy="52.8" r="1.9" fill="#6a9a2e" opacity="0.55"/>
<circle cx="63.9" cy="61.2" r="0.9" fill="#6a9a2e" opacity="0.55"/>
<circle cx="34.8" cy="72.5" r="0.8" fill="#c0e064" opacity="0.55"/>
<circle cx="86.8" cy="58.8" r="1.7" fill="#cce874" opacity="0.55"/>
<circle cx="34.3" cy="69.8" r="1.9" fill="#86b83e" opacity="0.55"/>
<circle cx="56.0" cy="79.3" r="1.1" fill="#c0e064" opacity="0.55"/>
<circle cx="143.3" cy="56.5" r="1.1" fill="#c0e064" opacity="0.55"/>
<circle cx="9.7" cy="52.6" r="2.0" fill="#b0d858" opacity="0.55"/>
<circle cx="61.5" cy="57.3" r="0.8" fill="#5a8828" opacity="0.55"/>
<circle cx="125.6" cy="81.8" r="1.9" fill="#cce874" opacity="0.55"/>
<circle cx="67.9" cy="83.5" r="2.1" fill="#86b83e" opacity="0.55"/>
<circle cx="25.3" cy="47.0" r="0.9" fill="#c0e064" opacity="0.55"/>
<circle cx="62.1" cy="56.3" r="0.9" fill="#c0e064" opacity="0.55"/>
<circle cx="1.9" cy="68.5" r="2.5" fill="#86b83e" opacity="0.55"/>
<circle cx="63.2" cy="67.2" r="2.0" fill="#5a8828" opacity="0.55"/>
<circle cx="98.2" cy="78.7" r="1.1" fill="#b0d858" opacity="0.55"/>
<circle cx="9.8" cy="71.4" r="2.6" fill="#5a8828" opacity="0.55"/>
<circle cx="119.8" cy="74.9" r="0.8" fill="#6a9a2e" opacity="0.55"/>
<circle cx="114.0" cy="65.1" r="2.1" fill="#6a9a2e" opacity="0.55"/>
<circle cx="26.8" cy="85.9" r="1.3" fill="#5a8828" opacity="0.55"/>
<circle cx="5.9" cy="60.1" r="2.1" fill="#5a8828" opacity="0.55"/>
<circle cx="144.3" cy="57.3" r="0.9" fill="#5a8828" opacity="0.55"/>
<circle cx="84.7" cy="64.0" r="2.2" fill="#cce874" opacity="0.55"/>
<circle cx="148.7" cy="58.5" r="2.5" fill="#86b83e" opacity="0.55"/>
<circle cx="13.1" cy="66.8" r="1.1" fill="#86b83e" opacity="0.55"/>
<circle cx="128.8" cy="54.9" r="1.1" fill="#b0d858" opacity="0.55"/>
<circle cx="29.4" cy="62.2" r="1.9" fill="#6a9a2e" opacity="0.55"/>
<circle cx="138.9" cy="71.6" r="2.0" fill="#5a8828" opacity="0.55"/>
<circle cx="128.8" cy="67.9" r="1.6" fill="#cce874" opacity="0.55"/>
<circle cx="106.7" cy="80.4" r="1.6" fill="#5a8828" opacity="0.55"/>
<circle cx="35.8" cy="81.5" r="2.2" fill="#6a9a2e" opacity="0.55"/>
<circle cx="95.3" cy="50.0" r="2.4" fill="#86b83e" opacity="0.55"/>
<circle cx="5.0" cy="51.4" r="1.9" fill="#86b83e" opacity="0.55"/>
<circle cx="52.8" cy="52.5" r="0.9" fill="#c0e064" opacity="0.55"/>
<circle cx="21.2" cy="72.1" r="0.9" fill="#c0e064" opacity="0.55"/>
<circle cx="112.7" cy="49.6" r="1.9" fill="#b0d858" opacity="0.55"/>
<circle cx="30.5" cy="84.2" r="1.8" fill="#5a8828" opacity="0.55"/>
<circle cx="10.1" cy="80.8" r="2.4" fill="#6a9a2e" opacity="0.55"/>
<circle cx="16.4" cy="55.0" r="1.0" fill="#c0e064" opacity="0.55"/>
<circle cx="145.2" cy="82.5" r="2.2" fill="#c0e064" opacity="0.55"/>
<circle cx="126.2" cy="71.6" r="1.3" fill="#c0e064" opacity="0.55"/>
<circle cx="20.3" cy="77.9" r="2.0" fill="#b0d858" opacity="0.55"/>
<circle cx="48.8" cy="63.5" r="0.8" fill="#b0d858" opacity="0.55"/>
<circle cx="142.3" cy="48.9" r="2.2" fill="#b0d858" opacity="0.55"/>
<circle cx="117.7" cy="70.5" r="1.7" fill="#b0d858" opacity="0.55"/>
<circle cx="94.6" cy="48.2" r="1.5" fill="#6a9a2e" opacity="0.55"/>
<circle cx="79.3" cy="50.8" r="1.6" fill="#c0e064" opacity="0.55"/>
<circle cx="82.3" cy="55.4" r="2.4" fill="#c0e064" opacity="0.55"/>
<circle cx="87.9" cy="58.2" r="1.6" fill="#cce874" opacity="0.55"/>
<circle cx="30.9" cy="76.7" r="2.6" fill="#c0e064" opacity="0.55"/>
<circle cx="53.2" cy="50.7" r="2.1" fill="#86b83e" opacity="0.55"/>
<circle cx="148.0" cy="70.1" r="2.5" fill="#cce874" opacity="0.55"/>
<circle cx="39.9" cy="83.8" r="1.3" fill="#86b83e" opacity="0.55"/>
<circle cx="143.6" cy="56.0" r="1.1" fill="#5a8828" opacity="0.55"/>
<circle cx="117.3" cy="66.1" r="2.6" fill="#cce874" opacity="0.55"/>
<circle cx="120.4" cy="71.5" r="1.4" fill="#6a9a2e" opacity="0.55"/>
<circle cx="142.1" cy="81.8" r="2.1" fill="#6a9a2e" opacity="0.55"/>
<circle cx="135.9" cy="48.0" r="1.2" fill="#b0d858" opacity="0.55"/>
<circle cx="65.5" cy="68.3" r="1.1" fill="#5a8828" opacity="0.55"/>
<circle cx="35.7" cy="65.0" r="1.8" fill="#5a8828" opacity="0.55"/>
<circle cx="115.2" cy="72.2" r="1.4" fill="#b0d858" opacity="0.55"/>
<circle cx="79.8" cy="80.9" r="1.6" fill="#cce874" opacity="0.55"/>
<circle cx="113.5" cy="53.6" r="1.6" fill="#b0d858" opacity="0.55"/>
<circle cx="88.6" cy="51.9" r="1.6" fill="#5a8828" opacity="0.55"/>
<circle cx="36.4" cy="54.5" r="1.3" fill="#5a8828" opacity="0.55"/>
<circle cx="126.5" cy="71.1" r="2.1" fill="#86b83e" opacity="0.55"/>
<circle cx="110.6" cy="70.5" r="1.4" fill="#86b83e" opacity="0.55"/>
<circle cx="50.2" cy="54.4" r="2.6" fill="#5a8828" opacity="0.55"/>
<circle cx="152.2" cy="53.4" r="2.0" fill="#86b83e" opacity="0.55"/>
<circle cx="58.8" cy="85.4" r="2.2" fill="#5a8828" opacity="0.55"/>
<g fill="none">
   <path d="M22 0 C26 12 33 22 34 34 L35 86" stroke="#80845a" stroke-width="4"/>
   <path d="M37 0 C37 16 36 30 42 52 L51 86" stroke="#625838" stroke-width="3.6"/>
   <path d="M55 0 L56 86" stroke="#a0a080" stroke-width="2.6"/>
   <path d="M65 0 L66 86" stroke="#4a4228" stroke-width="3.4"/>
   <path d="M88 0 L85 80" stroke="#3c4420" stroke-width="1.8"/>
   <path d="M9 25 L10 60" stroke="#3d4a20" stroke-width="1.4"/>
   <path d="M100 20 L101 50" stroke="#50502c" stroke-width="1.2"/>
   <path d="M112 22 L112 48" stroke="#4a4a2a" stroke-width="1.2"/>
   <path d="M129 34 L124 70" stroke="#a8a88c" stroke-width="3"/>
   <path d="M150 0 C148 20 145 50 141 86" stroke="#c0bea4" stroke-width="3.6"/>
  </g>
  <rect width="153" height="86" fill="#1a2a08" filter="url(#tex)" opacity="0.22"/>
</svg>
<svg class="abs" style="left:252px;top:364px" width="153" height="86" viewBox="0 0 153 86">
  <defs>
   <linearGradient id="sky" x1="0" y1="0" x2="0" y2="1"><stop offset="0" stop-color="#4ea5d8"/><stop offset="0.6" stop-color="#88c0dc"/><stop offset="1" stop-color="#c4dce4"/></linearGradient>
   <radialGradient id="glare" cx="0.1" cy="1" r="0.9"><stop offset="0" stop-color="#f4ead8" stop-opacity="1"/><stop offset="0.5" stop-color="#ece6dc" stop-opacity="0.6"/><stop offset="1" stop-color="#e8e4dc" stop-opacity="0"/></radialGradient>
   <linearGradient id="sea" x1="0" y1="0" x2="0" y2="1"><stop offset="0" stop-color="#2288a8"/><stop offset="0.5" stop-color="#2ea2b6"/><stop offset="1" stop-color="#48b6be"/></linearGradient>
   <linearGradient id="sand" x1="0" y1="0" x2="1" y2="1"><stop offset="0" stop-color="#e2c494"/><stop offset="0.6" stop-color="#d8ae78"/><stop offset="1" stop-color="#cc955c"/></linearGradient>
   <filter id="tex2" x="0" y="0" width="100%" height="100%"><feTurbulence type="fractalNoise" baseFrequency="0.5" numOctaves="2" seed="9"/><feColorMatrix type="matrix" values="0 0 0 0 0.3  0 0 0 0 0.2  0 0 0 0 0.1  0 0 0 -1.8 1.0"/></filter>
  </defs>
  <rect width="153" height="40" fill="url(#sky)"/>
  <rect width="120" height="40" fill="url(#glare)"/>
  <path d="M0 39 H153 V46 L110 48.5 L60 53 L0 60 Z" fill="url(#sea)"/>
  <path d="M0 51 L60 47 L110 44.5 L110 45.5 L60 48.2 L0 52.5 Z" fill="#a6d8d6" opacity="0.5"/>
  <path d="M0 58 L60 51.6 L112 47.6 L112 48.8 L60 53 L0 60.5 Z" fill="#eef6f2" opacity="0.7"/>
  <path d="M0 60 L60 53 L110 48.5 L153 45.5 V86 H0 Z" fill="url(#sand)"/>
  <path d="M0 60 L60 53 L110 48.5 L153 45.5 V86 H0 Z" fill="#604020" filter="url(#tex2)" opacity="0.35"/>
  <path d="M38 86 L58 70 L90 86 Z" fill="#b88450" opacity="0.45"/>
  <path d="M58 70 L100 74 L90 86 Z" fill="#e8d0a8" opacity="0.3"/>
  <g fill="#e8cc9c" opacity="0.9">
   <path d="M88 58 L104 50 L108 52 L94 62 Z"/><path d="M104 54 L124 46 L128 48 L110 57 Z"/>
   <path d="M120 50 L140 43 L143 45 L126 53 Z"/><path d="M136 47 L153 41 L153 44 L141 49 Z"/>
  </g>
  <g fill="#9c6c40" opacity="0.6">
   <path d="M92 63 L110 58 L112 60 L96 66 Z"/><path d="M112 58 L130 52 L132 54 L115 61 Z"/>
  </g>
  <g stroke="#6a4a2c" stroke-width="1.6">
   <path d="M85.6 36 V57"/><path d="M118.6 37 V47.5"/><path d="M134 38 V47"/><path d="M150 29 V46"/>
  </g>
  <path d="M105.4 32 L107.8 32 L108.4 48 L105 48 Z" fill="#8a5a30"/>
  <g fill="#74502e">
   <path d="M61.5 39.3 L84.2 18.6 L107.5 36.2 C95 35.6 75 36.8 61.5 39.3 Z"/>
   <path d="M108.5 37.8 L118.6 25.4 L132.4 37.6 C124 37 116 37.2 108.5 37.8 Z"/>
   <path d="M129.8 38.2 L133.8 29 L145.4 38 C140 37.6 134 37.8 129.8 38.2 Z"/>
   <path d="M143.4 30 L150.9 21.8 L153 23.4 V29.6 C150 29.4 146 29.6 143.4 30 Z"/>
  </g>
  <g fill="#a87440" opacity="0.55">
   <path d="M70 33 L84.2 20 L82 36.5 C77 36.8 73 37.5 70 38 Z"/>
   <path d="M112 34 L118.6 26.5 L120 37 L112 37.4 Z"/>
  </g>
  <g fill="#4a3018" opacity="0.4">
   <path d="M90 24 L107.5 36.2 C100 35.8 94 35.8 88 36 Z"/>
  </g>
</svg>
<svg class="abs" style="left:420px;top:364px" width="153" height="86" viewBox="0 0 153 86">
  <defs>
   <linearGradient id="rsky" x1="0" y1="0" x2="0" y2="1"><stop offset="0" stop-color="#e8dcca"/><stop offset="1" stop-color="#ded0bc"/></linearGradient>
   <linearGradient id="water" x1="0" y1="0" x2="0" y2="1"><stop offset="0" stop-color="#bcb4ae"/><stop offset="0.3" stop-color="#a09896"/><stop offset="1" stop-color="#6c6462"/></linearGradient>
   <linearGradient id="hill" x1="0" y1="0" x2="1" y2="0"><stop offset="0" stop-color="#9a7a64"/><stop offset="0.6" stop-color="#b49c88"/><stop offset="1" stop-color="#d0c0ae" stop-opacity="0"/></linearGradient>
   <filter id="tex3" x="0" y="0" width="100%" height="100%"><feTurbulence type="fractalNoise" baseFrequency="0.7 0.3" numOctaves="2" seed="2"/><feColorMatrix type="matrix" values="0 0 0 0 0.1  0 0 0 0 0.1  0 0 0 0 0.1  0 0 0 -1.8 1.0"/></filter>
  </defs>
  <rect width="153" height="86" fill="url(#rsky)"/>
  <path d="M25 6 C45 2 62 5 80 10 C96 14 112 18 128 21 L128 30 L25 30 Z" fill="#d0bfac" opacity="0.7"/>
  <path d="M0 1 C10 1 22 5 34 11 C46 17 54 23 62 28 L0 32 Z" fill="url(#hill)" opacity="0.85"/>
  <path d="M0 8 C8 7 16 12 22 18 C26 22 28 26 30 29 L0 31 Z" fill="#8a6a54" opacity="0.5"/>
  <path d="M0 29 C20 28 40 27 60 26.5 L62 28.5 L30 30.5 L0 33 Z" fill="#b08848" opacity="0.85"/>
  <path d="M64 23 C76 20 92 19 108 21 C116 18 124 19 130 21 V30 H64 Z" fill="#a08e7e" opacity="0.7"/>
  <path d="M0 34 L40 31 L70 29 L132 29 L136 86 H0 Z" fill="url(#water)"/>
  <path d="M50 32 C80 29 110 29 132 31 L132 57 C112 52 90 48 50 40 Z" fill="#d2cac0" opacity="0.5"/>
  <path d="M0 34 L136 29 L136 86 H0 Z" fill="#000" filter="url(#tex3)" opacity="0.28"/>
  <path d="M153 5 C148 7 142 12 139 18 C135 23 132 27 133 32 C136 40 137 48 135 56 C133 66 131 76 130 86 H153 Z" fill="#3c3430"/>
  <path d="M139 17 C132 18 125 21 121 27 L132 31 C131 26 134 21 139 17 Z" fill="#7a6c60" opacity="0.75"/>
  <path d="M134 30 C138 26 144 24 150 30 L146 40 Z" fill="#5a4e42" opacity="0.6"/>
</svg>
<svg class="abs" style="left:139px;top:386px" width="41" height="41" viewBox="0 0 41 41"><circle cx="20.2" cy="20.2" r="20.1" fill="#000" opacity="0.42"/><path d="M15 12.4 L30.4 21 L15 29.6 Z" fill="#fff" stroke="#fff" stroke-width="0.6" stroke-linejoin="round"/></svg>
<svg class="abs" style="left:307px;top:386px" width="41" height="41" viewBox="0 0 41 41"><circle cx="20.2" cy="20.2" r="20.1" fill="#000" opacity="0.42"/><path d="M15 12.4 L30.4 21 L15 29.6 Z" fill="#fff" stroke="#fff" stroke-width="0.6" stroke-linejoin="round"/></svg>
<svg class="abs" style="left:476px;top:386px" width="41" height="41" viewBox="0 0 41 41"><circle cx="20.2" cy="20.2" r="20.1" fill="#000" opacity="0.42"/><path d="M15 12.4 L30.4 21 L15 29.6 Z" fill="#fff" stroke="#fff" stroke-width="0.6" stroke-linejoin="round"/></svg>
<div class="abs badge" style="left:203px;top:436px;width:29px;background:rgba(0,0,0,0.82);font-size:9px;padding-top:0.5px">17:58</div>
<div class="abs badge" style="left:372px;top:436px;width:29px;background:rgba(0,0,0,0.82);font-size:9px;padding-top:0.5px">57:42</div>
<div class="abs badge" style="left:541px;top:436px;width:29px;background:rgba(0,0,0,0.82);font-size:9px;padding-top:0.5px">23:49</div>
  <div class="abs card" style="left:590px;top:364px;height:86px"></div>
  <svg class="abs" style="left:649px;top:389px" width="34" height="40" viewBox="0 0 34 40">
    <path d="M4.5 3 H21.7 L30.8 12.3 V35 Q30.8 36.5 29.3 36.5 H4.5 Q3 36.5 3 35 V4.5 Q3 3 4.5 3 Z" fill="none" stroke="#3b7bdc" stroke-width="2.1" stroke-linejoin="round"/>
    <path d="M21.7 3 V12.3 H30.8" fill="none" stroke="#3b7bdc" stroke-width="2.1" stroke-linejoin="round"/>
    <path d="M9 18.3 H24.2 M9 23.4 H24.2 M9 28.3 H24.2" stroke="#3b7bdc" stroke-width="2"/>
  </svg>
  <div class="abs card" style="left:759px;top:364px;height:86px"></div>
  <svg class="abs" style="left:819px;top:392px" width="34" height="36" viewBox="0 0 34 36">
    <path d="M12.2 7 L31.5 1.8 V25" fill="none"/>
    <path d="M12.2 6.8 L30.2 1.9 C31 1.7 31.6 2.2 31.6 3 V25 H29.4 V10.8 L14.4 14.8 V30 H12.2 Z" fill="#8f56d4"/>
    <ellipse cx="8" cy="30" rx="6.2" ry="3.6" fill="#8f56d4"/>
    <ellipse cx="25" cy="25" rx="6.2" ry="3.6" fill="#8f56d4"/>
  </svg>
<!--ROW2END-->
</div>
</body></html>
